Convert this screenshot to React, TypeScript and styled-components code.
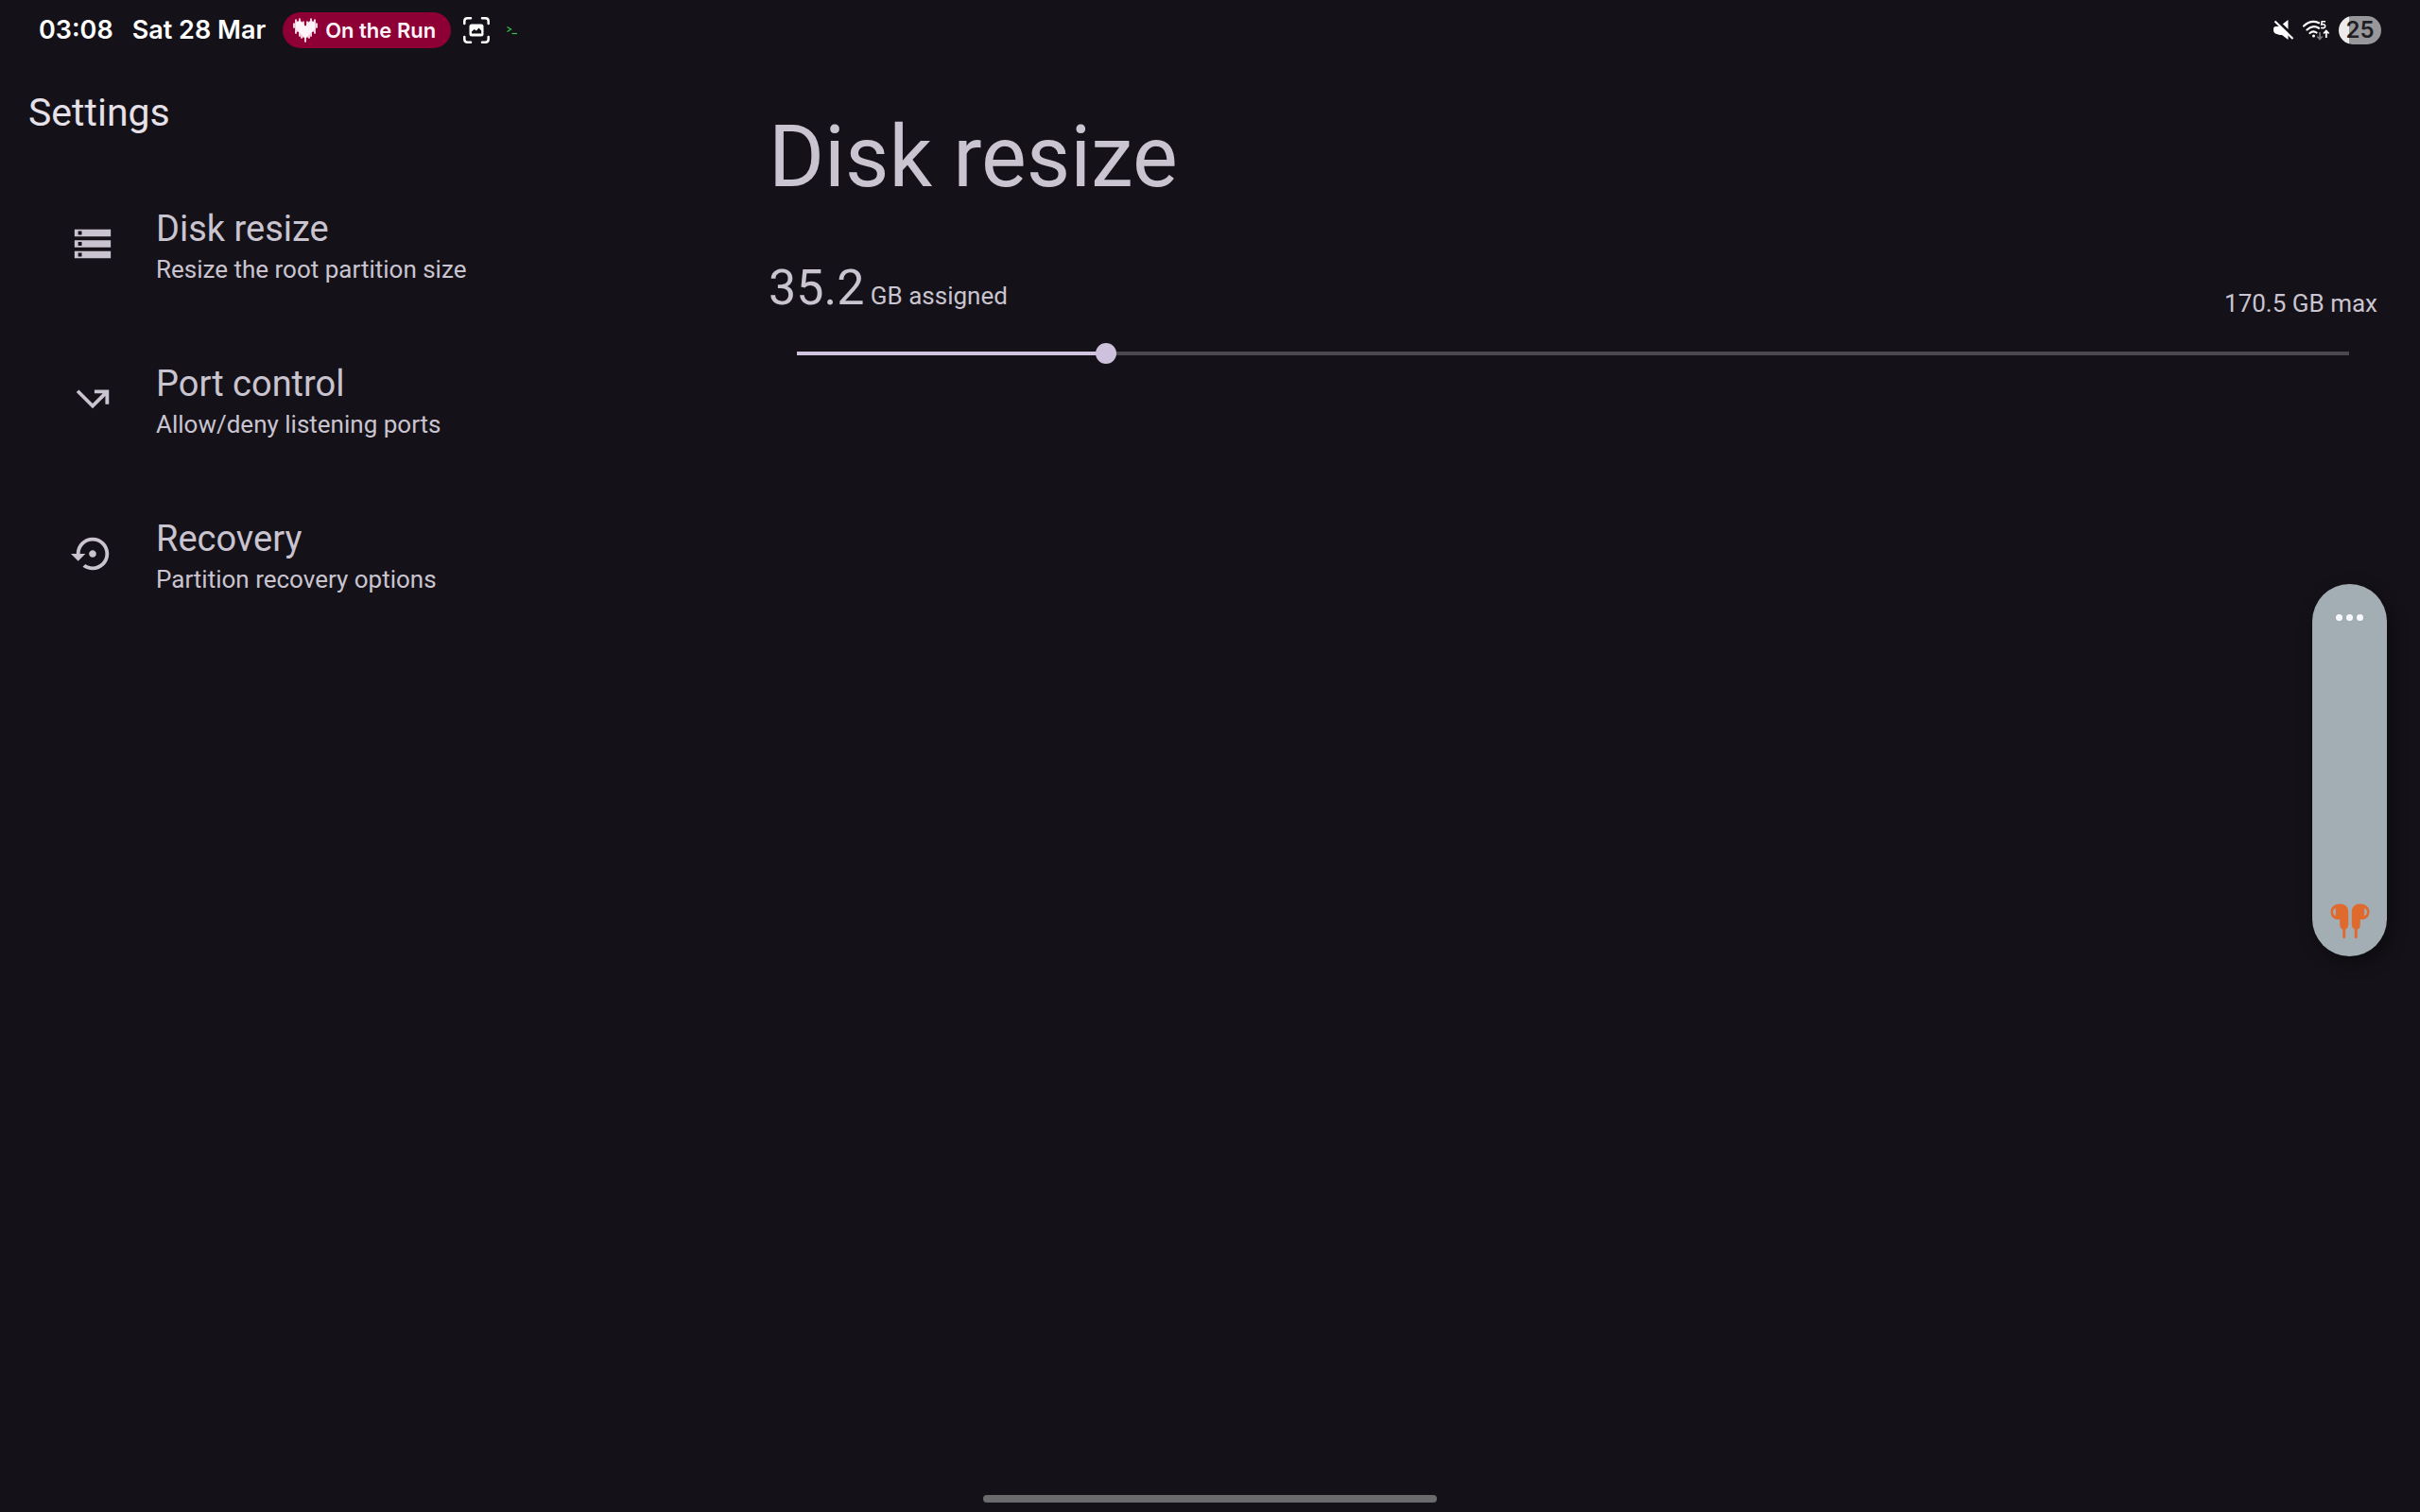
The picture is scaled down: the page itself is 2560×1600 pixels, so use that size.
import React, { useState } from "react";
import styled, { createGlobalStyle } from "styled-components";

const GlobalStyle = createGlobalStyle`
  * { box-sizing: border-box; }
  body {
    margin: 0;
    background: #141218;
    color: #cac4d0;
    font-family: Roboto, "Liberation Sans", sans-serif;
  }
`;

const Page = styled.div`
  min-height: 100vh;
  display: flex;
  flex-direction: column;
`;

const StatusBar = styled.header`
  height: 64px;
  padding: 0 41px;
  display: flex;
  align-items: center;
  justify-content: space-between;
  color: #ffffff;
  font-family: Inter, Roboto, sans-serif;
  font-weight: 600;
`;

const StatusGroup = styled.div<{ $gap: number }>`
  display: flex;
  align-items: center;
  gap: ${(p) => p.$gap}px;
`;

const StatusText = styled.span`
  font-size: 27px;
  line-height: 36px;
  white-space: nowrap;
`;

const NowPlaying = styled.button`
  height: 38px;
  padding: 0 16px 0 11px;
  display: flex;
  align-items: center;
  gap: 8px;
  border: 0;
  border-radius: 19px;
  background: #8e0035;
  color: #fff4fa;
  font: inherit;
  font-size: 22px;
  line-height: 28px;
  white-space: nowrap;
`;

const Battery = styled.div<{ $level: number }>`
  width: 45px;
  height: 30px;
  border-radius: 15px;
  display: flex;
  align-items: center;
  justify-content: center;
  background: linear-gradient(to right, #ececec ${(p) => p.$level}%, #98989a ${(p) => p.$level}%);
  color: #1f1e25;
  font-size: 24px;
  line-height: 30px;
`;

const Body = styled.div`
  flex: 1;
  display: grid;
  grid-template-columns: 3fr 7fr;
`;

const Sidebar = styled.aside`
  padding-top: 30px;
`;

const SidebarTitle = styled.h2`
  margin: 0 0 32px;
  padding: 0 30px;
  color: #e6e0e9;
  font-size: 41px;
  line-height: 50px;
  font-weight: 400;
`;

const NavItem = styled.a`
  height: 164px;
  padding: 0 44px 0 75px;
  display: flex;
  align-items: center;
  gap: 44px;
  color: inherit;
  text-decoration: none;
`;

const NavIcon = styled.svg`
  width: 46px;
  height: 46px;
  flex: none;
  fill: currentColor;
`;

const NavText = styled.span`
  display: flex;
  flex-direction: column;
  gap: 3px;
`;

const NavTitle = styled.span`
  font-size: 38px;
  line-height: 50px;
`;

const NavDetail = styled.span`
  font-size: 26px;
  line-height: 30px;
`;

const Content = styled.main`
  padding: 50px 45px 0;
`;

const Title = styled.h1`
  margin: 0 0 54px;
  font-size: 90px;
  line-height: 106px;
  font-weight: 400;
`;

const SizeRow = styled.div`
  display: flex;
  align-items: flex-end;
  justify-content: space-between;
  font-size: 26px;
  line-height: 30px;
`;

const Assigned = styled.label`
  white-space: nowrap;
`;

const AssignedValue = styled.span`
  font-size: 52px;
  line-height: 62px;
`;

const SliderWrap = styled.div`
  padding: 26px 30px 0;
  display: flex;
`;

const Slider = styled.input`
  appearance: none;
  width: 100%;
  height: 24px;
  margin: 0;
  background: transparent;

  &::-webkit-slider-runnable-track {
    height: 4px;
    background: linear-gradient(
      to right,
      #d0c4df var(--filled),
      #4b484f var(--filled)
    );
  }

  &::-webkit-slider-thumb {
    appearance: none;
    width: 22px;
    height: 22px;
    margin-top: -9px;
    border-radius: 50%;
    background: #cdc1dd;
  }
`;

const VolumePanel = styled.section`
  position: fixed;
  top: 618px;
  right: 35px;
  width: 79px;
  height: 394px;
  padding: 26px 0 18px;
  display: flex;
  flex-direction: column;
  align-items: center;
  justify-content: space-between;
  border-radius: 40px;
  background: #a3aeb4;
  box-shadow: 4px 6px 18px rgba(0, 0, 0, 0.45);
`;

const MoreButton = styled.button`
  padding: 6px;
  display: flex;
  gap: 4px;
  border: 0;
  background: none;
`;

const Dot = styled.span`
  width: 7px;
  height: 7px;
  border-radius: 50%;
  background: #f8f8ff;
`;

const HomeHandle = styled.div`
  position: fixed;
  bottom: 10px;
  left: 50%;
  width: 480px;
  height: 8px;
  margin-left: -240px;
  border-radius: 4px;
  background: #6b6a6c;
`;

const items = [
  {
    id: "disk",
    title: "Disk resize",
    detail: "Resize the root partition size",
    path: "M2 20h20v-4H2v4zm2-3h2v2H4v-2zM2 4v4h20V4H2zm4 3H4V5h2v2zm-4 7h20v-4H2v4zm2-3h2v2H4v-2z",
  },
  {
    id: "ports",
    title: "Port control",
    detail: "Allow/deny listening ports",
    path: "M3 8.41l9 9 7-7V15h2V7h-8v2h4.59L12 14.59 4.41 7 3 8.41z",
  },
  {
    id: "recovery",
    title: "Recovery",
    detail: "Partition recovery options",
    path: "M14 12c0-1.1-.9-2-2-2s-2 .9-2 2 .9 2 2 2 2-.9 2-2zm-2-9c-4.97 0-9 4.03-9 9H0l4 4 4-4H5c0-3.87 3.13-7 7-7s7 3.13 7 7-3.13 7-7 7c-1.51 0-2.91-.49-4.06-1.3l-1.42 1.44C8.04 20.3 9.94 21 12 21c4.97 0 9-4.03 9-9s-4.03-9-9-9z",
  },
];

// Top and bottom edge of each bar of the heart-shaped wave form.
const heartBars = [
  [5, 11], [1, 17], [3, 15], [0, 20], [5, 22], [3, 21], [8, 26],
  [3, 21], [5, 22], [0, 20], [3, 15], [1, 17], [5, 11],
];

const HeartIcon = () => (
  <svg width="26" height="26" viewBox="0 0 26 26" aria-hidden="true">
    <path d="M3 5L6 3.500h3L13 9l4-5.500h3L23 5v7L13 21.500 3 12z" fill="#fff4fa" />
    {heartBars.map(([top, bottom], i) => (
      <path key={i} d={`M${i * 2 + 1} ${top + 1}V${bottom - 1}`} stroke="#fff4fa" strokeWidth="1.700" strokeLinecap="round" />
    ))}
  </svg>
);

const CaptureIcon = () => (
  <svg width="28" height="28" viewBox="0 0 28 28" fill="none" aria-hidden="true">
    <path d="M1.3 7V4.5Q1.3 1.3 4.5 1.3H8M20 1.3h3.5q3.2 0 3.2 3.2V7M26.7 21v2.500q0 3.200-3.200 3.200H20M8 26.700H4.500q-3.200 0-3.200-3.200V21" stroke="#fff" strokeWidth="2.500" strokeLinecap="round" />
    <rect x="6.500" y="7.500" width="15" height="13" rx="2.500" fill="#fff" />
    <path d="M9 17.500v-2l2.500-2.500 2.500 1.500 2.500-3 2.700 3v3z" fill="#141218" />
  </svg>
);

const PromptIcon = () => (
  <svg width="11" height="10" viewBox="0 0 11 10" fill="none" stroke="#35c24a" aria-hidden="true">
    <path d="M.5 1.500L4.500 4 .5 6.500" strokeWidth="1.200" />
    <path d="M5.500 8.500H11" strokeWidth="1.200" />
  </svg>
);

const MuteIcon = () => (
  <svg width="22" height="22" viewBox="0 0 22 22" aria-hidden="true">
    <path d="M0 9.500Q0 7 2.500 7h4L15.500 0V21L9 16H6.500L3.500 15Q0 14 0 11z" fill="#fff" />
    <path d="M3 0L22.500 18.500" stroke="#141218" strokeWidth="3" />
    <path d="M1.500 1.500L20.500 20" stroke="#fff" strokeWidth="2.200" />
  </svg>
);

const WifiIcon = () => (
  <svg width="29" height="23" viewBox="0 0 29 23" fill="none" stroke="#fff" aria-hidden="true">
    <path d="M1 6.500Q8.500-.5 17 3.200M4.500 10.500Q10.500 5 17 8.800M7.500 14Q11 10.800 14.500 13.500" strokeWidth="2.200" strokeLinecap="round" />
    <circle cx="11.500" cy="17" r="1.500" fill="#fff" stroke="none" />
    <path d="M24 1.700H20.200L19.700 5Q23.700 4.200 23.700 6.700T19 8.500" strokeWidth="1.600" />
    <path d="M18 13v7M15.300 17.500L18 20.500l2.700-3" stroke="#77767b" strokeWidth="1.800" />
    <path d="M24.800 19v-7M22 14.500l2.800-3 2.800 3" strokeWidth="1.800" />
  </svg>
);

const EarbudsIcon = () => (
  <svg width="42" height="38" viewBox="0 0 42 38" fill="#e0692d" aria-hidden="true">
    <path d="M10.500.5C15.500.5 19.200 3.500 19.200 9V22q0 4-3 5.500V35.500q0 1.500-1.500 1.500t-1.500-1.500V27.500q-3-1.500-3-5V17C5 17.500.5 15 .5 9 .5 3.500 5 .5 10.500.5zM5.800 4.700Q3 6 3 9t2.800 4.300z" />
    <path d="M31.500.5C26.500.5 22.800 3.500 22.800 9V22q0 4 3 5.500V35.500q0 1.500 1.500 1.500t1.500-1.500V27.500q3-1.500 3-5V17C37 17.500 41.500 15 41.500 9 41.500 3.500 37 .5 31.500.5zM36.200 4.700Q39 6 39 9t-2.800 4.300z" />
  </svg>
);

const MIN_GB = 2.4;
const MAX_GB = 170.5;

export default function App() {
  const [size, setSize] = useState(35.2);
  const filled = ((size - MIN_GB) / (MAX_GB - MIN_GB)) * 100;

  return (
    <Page>
      <GlobalStyle />
      <StatusBar>
        <StatusGroup $gap={18}>
          <StatusGroup $gap={20}>
            <StatusText>03:08</StatusText>
            <StatusText>Sat 28 Mar</StatusText>
          </StatusGroup>
          <StatusGroup $gap={18}>
            <StatusGroup $gap={13}>
              <NowPlaying type="button">
                <HeartIcon />
                On the Run
              </NowPlaying>
              <CaptureIcon />
            </StatusGroup>
            <PromptIcon />
          </StatusGroup>
        </StatusGroup>
        <StatusGroup $gap={9}>
          <MuteIcon />
          <WifiIcon />
          <Battery $level={25}>25</Battery>
        </StatusGroup>
      </StatusBar>

      <Body>
        <Sidebar>
          <SidebarTitle>Settings</SidebarTitle>
          <nav aria-label="Settings">
            {items.map((item) => (
              <NavItem key={item.id} href={`#${item.id}`}>
                <NavIcon viewBox="0 0 24 24" aria-hidden="true">
                  <path d={item.path} />
                </NavIcon>
                <NavText>
                  <NavTitle>{item.title}</NavTitle>
                  <NavDetail>{item.detail}</NavDetail>
                </NavText>
              </NavItem>
            ))}
          </nav>
        </Sidebar>

        <Content>
          <Title>Disk resize</Title>
          <SizeRow>
            <Assigned htmlFor="disk-size">
              <AssignedValue>{size.toFixed(1)}</AssignedValue> GB assigned
            </Assigned>
            <span>{MAX_GB} GB max</span>
          </SizeRow>
          <SliderWrap>
            <Slider
              id="disk-size"
              type="range"
              min={MIN_GB}
              max={MAX_GB}
              step={0.1}
              value={size}
              onChange={(e) => setSize(Number(e.target.value))}
              style={{ "--filled": `${filled}%` } as React.CSSProperties}
            />
          </SliderWrap>
        </Content>
      </Body>

      <VolumePanel aria-label="Volume">
        <MoreButton type="button" aria-label="More">
          <Dot />
          <Dot />
          <Dot />
        </MoreButton>
        <EarbudsIcon />
      </VolumePanel>
      <HomeHandle />
    </Page>
  );
}
